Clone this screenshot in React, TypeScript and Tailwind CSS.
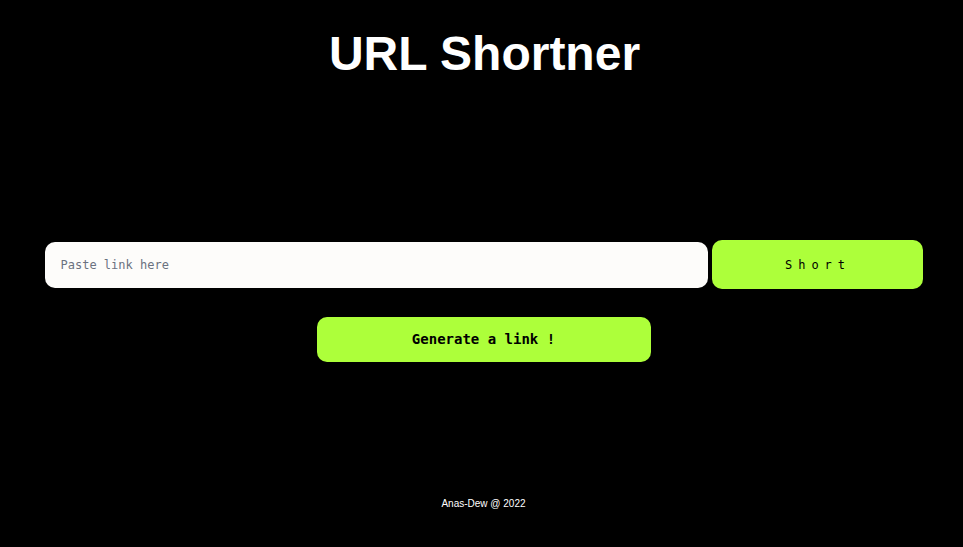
export default function App() {
  return (
    <div className="min-h-[547px] bg-black text-white flex flex-col items-center pl-[4px]">
      <h1
        className="pt-[26px] text-[48px] leading-[55px] font-bold pl-[2px]"
        style={{ fontFamily: '"Liberation Sans", Arial, sans-serif' }}
      >
        URL Shortner
      </h1>

      <div className="mt-[159px] w-[878px] flex items-center gap-[4px]">
        <input
          type="text"
          placeholder="Paste link here"
          className="flex-1 h-[46px] rounded-[10px] bg-[#fdfcfa] px-[16px] text-[12px] text-black placeholder:text-[#6b7280] outline-none font-['DejaVu_Sans_Mono',monospace]"
        />
        <button className="w-[211px] h-[49px] rounded-[10px] bg-[#adff3a] text-black text-[12px] tracking-[6px] pl-[2px] font-['DejaVu_Sans_Mono',monospace]">
          Short
        </button>
      </div>

      <button className="mt-[28px] w-[334px] h-[45px] rounded-[10px] bg-[#adff3a] text-black text-[14px] font-bold font-['DejaVu_Sans_Mono',monospace]">
        Generate a link !
      </button>

      <footer
        className="mt-[136px] text-[10px] leading-[12px] text-white"
        style={{ fontFamily: '"Liberation Sans", Arial, sans-serif' }}
      >
        Anas-Dew @ 2022
      </footer>
    </div>
  )
}
